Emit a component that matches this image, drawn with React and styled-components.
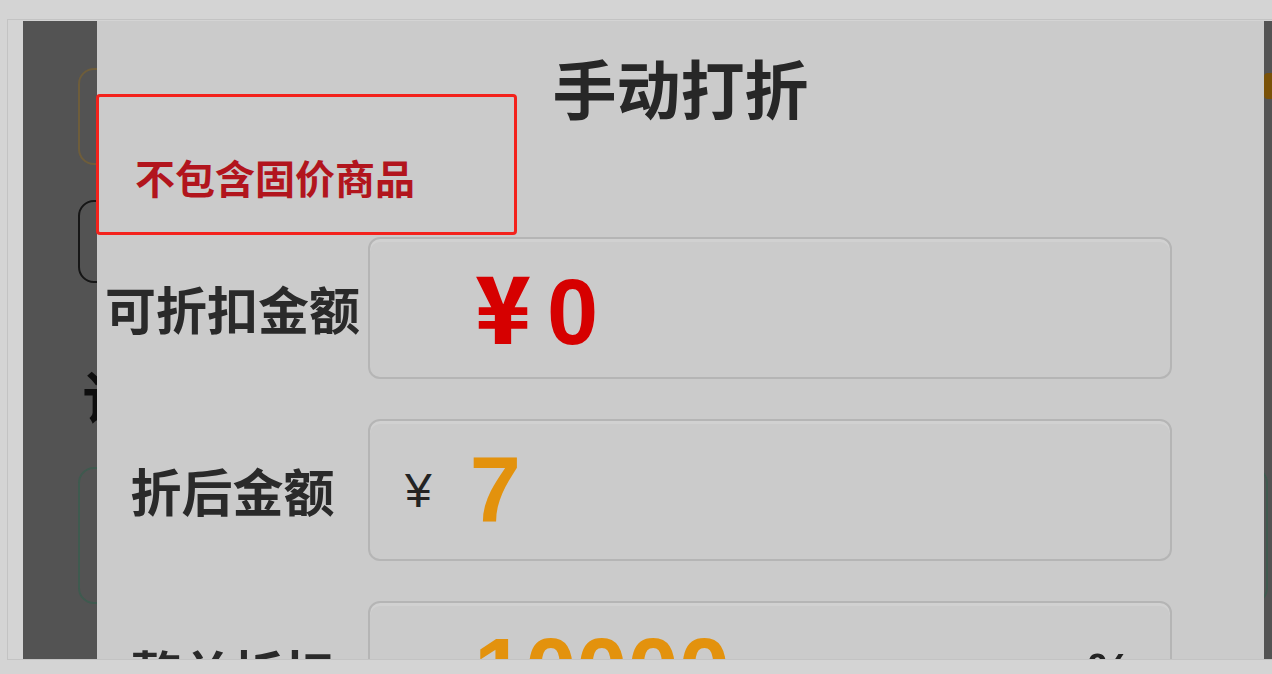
import React from "react";
import styled, { createGlobalStyle } from "styled-components";

const GlobalStyle = createGlobalStyle`
  html, body {
    margin: 0;
    padding: 0;
    background: #d4d4d4;
    overflow: hidden;
  }
  *, *::before, *::after {
    box-sizing: border-box;
  }
`;

const cjk = `"Noto Sans CJK SC", "Noto Sans", sans-serif`;
const num = `"Liberation Sans", Arial, sans-serif`;

const Frame = styled.div`
  margin: 19px 0 0 7px;
  height: 641px;
  padding: 1px 0 0 15px;
  border-top: 1px solid #c3c3c3;
  border-left: 1px solid #c3c3c3;
  border-bottom: 1px solid #c3c3c3;
`;

const Screen = styled.div`
  position: relative;
  height: 638px;
  background: #535353;
  overflow: hidden;
`;

/* page behind the dimmed overlay */
const BackPage = styled.div`
  width: 1249px;
  padding: 47px 4px 0 55px;
  display: flex;
  flex-direction: column;
  align-items: flex-start;
`;

const BackCard = styled.div`
  width: ${(p) => p.w || "100%"};
  height: ${(p) => p.h}px;
  margin-top: ${(p) => p.mt || 0}px;
  border: 2px solid ${(p) => p.color};
  border-radius: 16px;
`;

const BackBadge = styled.div`
  position: absolute;
  top: 52px;
  right: 0;
  width: 8px;
  height: 26px;
  border-radius: 4px 0 0 4px;
  background: #7a5208;
`;

const BackHeading = styled.div`
  margin-top: 80px;
  padding-left: 4px;
  font-family: ${cjk};
  font-size: 56px;
  font-weight: 700;
  line-height: 64px;
  color: #0e0e0e;
`;

const Modal = styled.div`
  position: absolute;
  top: 0;
  bottom: 0;
  left: 74px;
  width: 1167px;
  background: #cbcbcb;
  padding-top: 27px;
`;

const Title = styled.h2`
  margin: 0;
  text-align: center;
  font-family: ${cjk};
  font-size: 64px;
  font-weight: 700;
  line-height: 77px;
  color: #272727;
`;

const Note = styled.div`
  position: relative;
  margin-top: 28px;
  padding-left: 38px;
  font-family: ${cjk};
  font-size: 40px;
  font-weight: 700;
  line-height: 48px;
  color: #b2151d;

  &::before {
    content: "";
    position: absolute;
    left: -1px;
    top: -59px;
    width: 421px;
    height: 141px;
    border: 3px solid #f3221c;
    border-radius: 4px;
  }
`;

const Form = styled.div`
  margin-top: 36px;
  display: grid;
  grid-template-columns: 271px 804px;
  grid-auto-rows: 142px;
  row-gap: 40px;
`;

const Label = styled.div`
  display: flex;
  align-items: center;
  justify-content: center;
  font-family: ${cjk};
  font-size: 51px;
  font-weight: 700;
  color: #2a2a2a;
`;

const Field = styled.div`
  display: flex;
  align-items: center;
  padding: 0 38px 0 ${(p) => p.pl}px;
  border: 2px solid #b5b5b5;
  border-radius: 12px;
  box-shadow: inset 0 3px 0 rgba(255, 255, 255, 0.12);
`;

const BigValue = styled.span`
  font-family: ${num};
  font-size: 92px;
  font-weight: 700;
  line-height: 1.1;
  color: ${(p) => p.color};
`;

const YenBig = styled.span`
  margin-right: 16px;
  font-family: ${cjk};
  font-weight: 900;
`;

const Prefix = styled.span`
  margin-right: 38px;
  font-family: ${num};
  font-size: 48px;
  color: #232323;
`;

const Suffix = styled.span`
  margin-left: auto;
  font-family: ${num};
  font-size: 50px;
  font-weight: 700;
  color: #232323;
`;

const App = () => {
  return (
    <>
      <GlobalStyle />
      <Frame>
        <Screen>
          <BackPage>
            <BackCard h={97} w="40%" color="#6e5d3b" />
            <BackCard h={83} w="40%" mt={35} color="#161616" />
            <BackHeading>订单信息</BackHeading>
            <BackCard h={137} mt={40} color="#3f5a4f" />
          </BackPage>
          <BackBadge />

          <Modal>
            <Title>手动打折</Title>
            <Note>不包含固价商品</Note>
            <Form>
              <Label>可折扣金额</Label>
              <Field pl={105}>
                <BigValue color="#d60000">
                  <YenBig>¥</YenBig>0
                </BigValue>
              </Field>

              <Label>折后金额</Label>
              <Field pl={35}>
                <Prefix>¥</Prefix>
                <BigValue color="#e3920d">7</BigValue>
              </Field>

              <Label>整单折扣</Label>
              <Field pl={104}>
                <BigValue color="#e3920d">10000</BigValue>
                <Suffix>%</Suffix>
              </Field>
            </Form>
          </Modal>
        </Screen>
      </Frame>
    </>
  );
};

export default App;
